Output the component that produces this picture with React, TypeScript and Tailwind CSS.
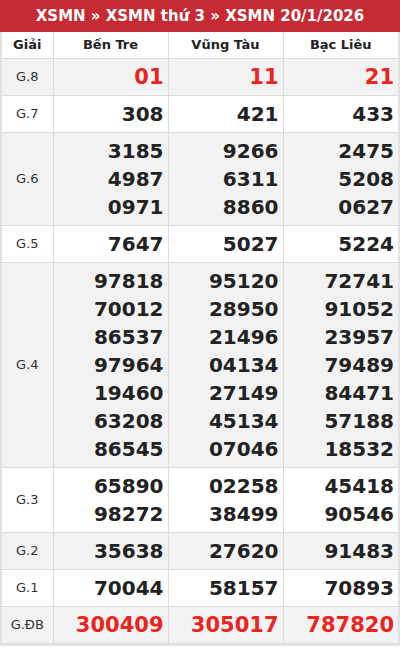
import React from "react";

type Row = { label: string; vals: string[][]; red?: boolean; gray: boolean };

const rows: Row[] = [
  { label: "G.8", vals: [["01"], ["11"], ["21"]], red: true, gray: true },
  { label: "G.7", vals: [["308"], ["421"], ["433"]], gray: false },
  {
    label: "G.6",
    vals: [
      ["3185", "4987", "0971"],
      ["9266", "6311", "8860"],
      ["2475", "5208", "0627"],
    ],
    gray: true,
  },
  { label: "G.5", vals: [["7647"], ["5027"], ["5224"]], gray: false },
  {
    label: "G.4",
    vals: [
      ["97818", "70012", "86537", "97964", "19460", "63208", "86545"],
      ["95120", "28950", "21496", "04134", "27149", "45134", "07046"],
      ["72741", "91052", "23957", "79489", "84471", "57188", "18532"],
    ],
    gray: true,
  },
  {
    label: "G.3",
    vals: [
      ["65890", "98272"],
      ["02258", "38499"],
      ["45418", "90546"],
    ],
    gray: false,
  },
  { label: "G.2", vals: [["35638"], ["27620"], ["91483"]], gray: true },
  { label: "G.1", vals: [["70044"], ["58157"], ["70893"]], gray: false },
  { label: "G.ĐB", vals: [["300409"], ["305017"], ["787820"]], red: true, gray: true },
];

export default function App() {
  return (
    <div
      className="w-[400px] h-[647px] bg-white"
      style={{ fontFamily: '"DejaVu Sans", sans-serif' }}
    >
      <div className="h-[32px] bg-[#c62a32] text-white font-bold text-[15px] flex items-center justify-center">
        XSMN » XSMN thứ 3 » XSMN 20/1/2026
      </div>
      <div className="border-x-2 border-b-2 border-[#e3e3e6]">
        <table className="w-full border-collapse table-fixed">
          <colgroup>
            <col className="w-[51px]" />
            <col />
            <col />
            <col />
          </colgroup>
          <thead>
            <tr className="h-[26px] text-[13px] font-bold text-[#222]">
              <th className="border-r border-b border-[#dcdcdc] font-bold">Giải</th>
              <th className="border-r border-b border-[#dcdcdc] font-bold">Bến Tre</th>
              <th className="border-r border-b border-[#dcdcdc] font-bold">Vũng Tàu</th>
              <th className="border-b border-[#dcdcdc] font-bold">Bạc Liêu</th>
            </tr>
          </thead>
          <tbody>
            {rows.map((r) => (
              <tr key={r.label} className={r.gray ? "bg-[#f2f2f3]" : "bg-white"}>
                <td className="border-r border-b border-[#dcdcdc] text-center text-[13px] text-[#333] align-middle">
                  {r.label}
                </td>
                {r.vals.map((v, i) => (
                  <td
                    key={i}
                    className={
                      "border-b border-[#dcdcdc] text-right pr-[4px] pt-[4px] pb-[4px] align-middle " +
                      (i < 2 ? "border-r " : "")
                    }
                  >
                    {v.map((n) => (
                      <div
                        key={n}
                        className={
                          r.red
                            ? "text-[21px] leading-[28px] font-bold text-[#e8251e]"
                            : "text-[20px] leading-[28px] font-bold text-[#222]"
                        }
                      >
                        {n}
                      </div>
                    ))}
                  </td>
                ))}
              </tr>
            ))}
          </tbody>
        </table>
      </div>
    </div>
  );
}
